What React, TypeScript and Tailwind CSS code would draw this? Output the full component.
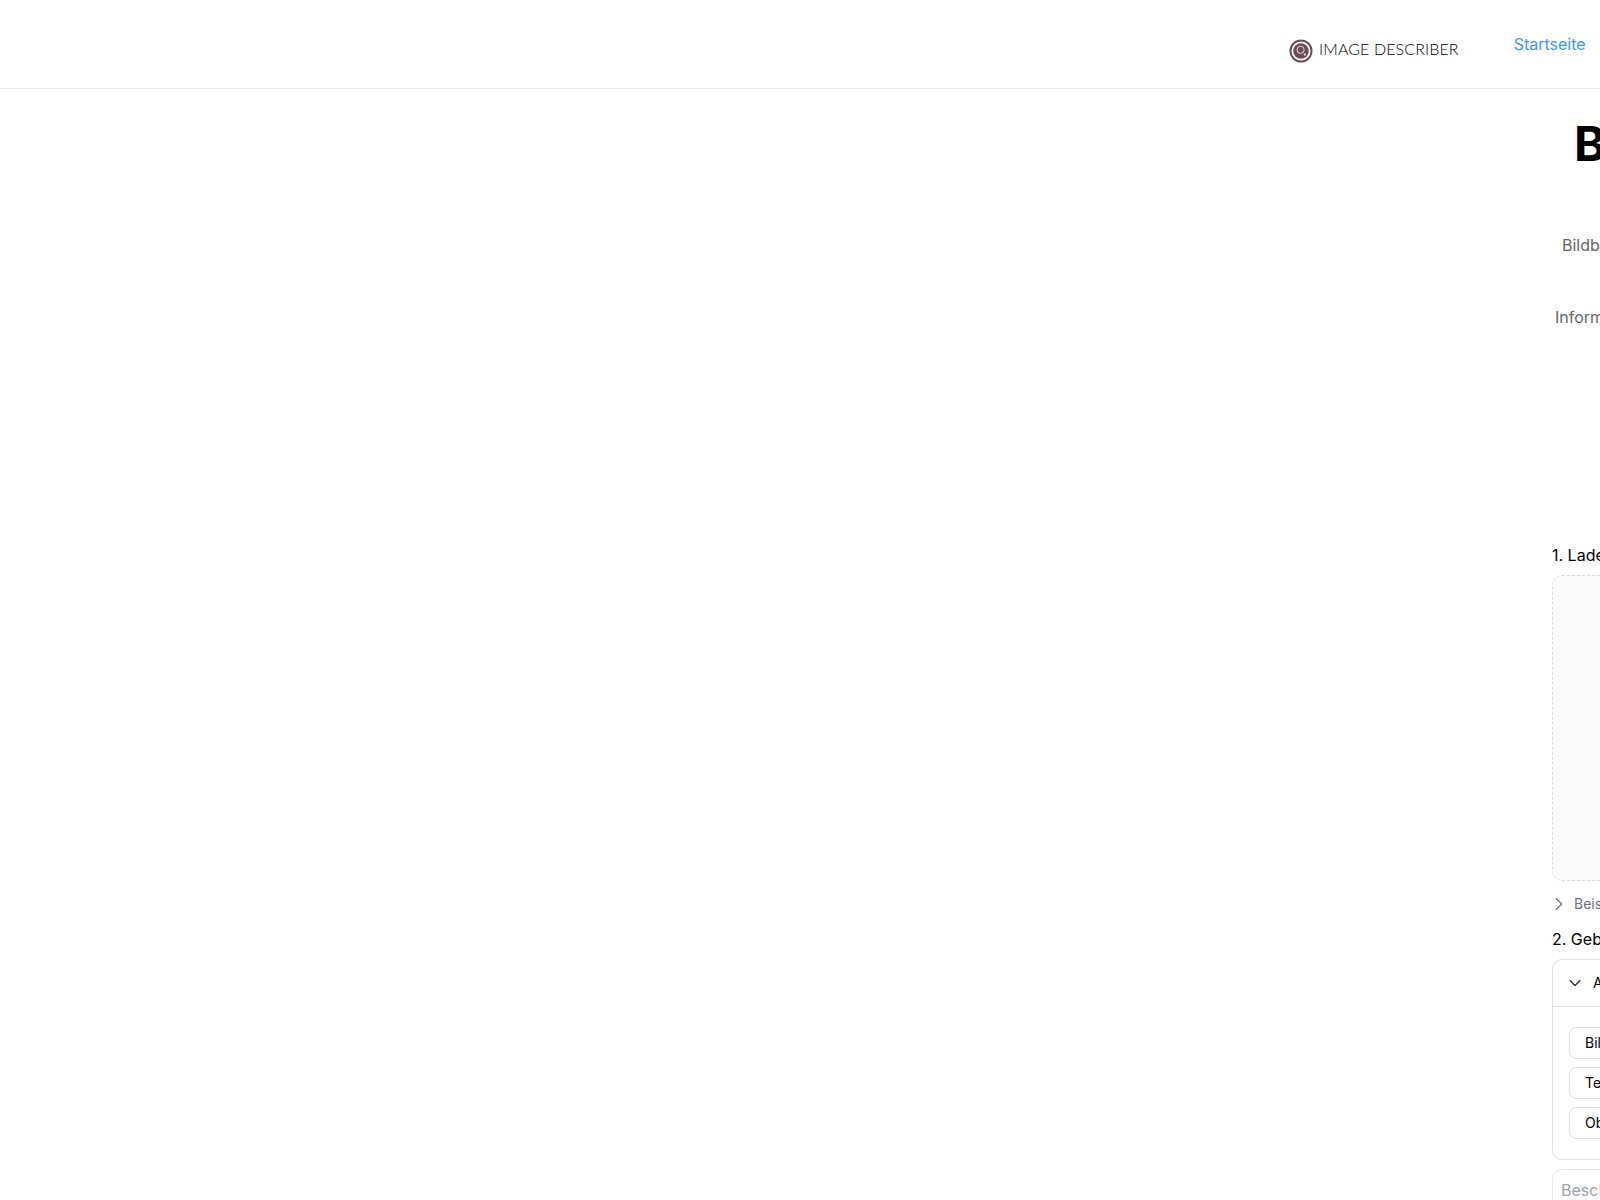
import { ChevronDown, ChevronRight } from "lucide-react";

function Logo() {
  return (
    <svg width="24" height="24" viewBox="0 0 24 24" className="shrink-0">
      <circle cx="12" cy="12" r="10.5" fill="none" stroke="#6d4c58" strokeWidth="2" />
      <circle cx="12" cy="12" r="7.8" fill="#6d4c58" />
      <circle cx="11.6" cy="10.8" r="3.6" fill="none" stroke="#e6dce0" strokeWidth="1" />
      <circle cx="15.8" cy="15.6" r="1.1" fill="#efe8ea" />
    </svg>
  );
}

const chips = ["Bildbeschreibung", "Text extrahieren", "Objekte erkennen"];

export default function App() {
  return (
    <div className="h-[1200px] w-full overflow-hidden bg-white font-['Inter',sans-serif] text-black">
      <header className="flex h-[89px] items-start border-b border-[#e5e7eb] pl-[1289px]">
        <div className="mt-[37px] flex items-center gap-[6px]">
          <Logo />
          <span className="pb-[3px] whitespace-nowrap font-['Lato',sans-serif] text-[16px] leading-6 font-light tracking-[0.1px] text-black">
            IMAGE DESCRIBER
          </span>
        </div>
        <a className="ml-[55px] mt-[32px] text-base leading-6 text-[#4096ff]">Startseite</a>
      </header>

      <main className="w-[2400px] pl-[1552px]">
        <div className="w-[800px]">
          <h1 className="mt-[25px] pl-[22px] text-5xl leading-[60px] font-bold whitespace-nowrap">
            Bildbeschreiber
          </h1>
          <p className="mt-[59px] pl-[10px] text-base leading-6 whitespace-nowrap text-[#666]">
            Bildbeschreibung mit KI
          </p>
          <p className="mt-[48px] pl-[3px] text-base leading-6 whitespace-nowrap text-[#666]">
            Informationen aus Bildern
          </p>

          <h2 className="mt-[214px] text-base leading-6 whitespace-nowrap">1. Laden Sie ein Bild hoch</h2>
          <div className="mt-[8px] h-[306px] rounded-[10px] border border-dashed border-[#d9d9d9] bg-[#fafafa]" />

          <div className="mt-[13px] flex h-5 items-center text-sm whitespace-nowrap text-[#6b7280]">
            <ChevronRight size={22} strokeWidth={1.25} className="mr-1 -ml-1 shrink-0" />
            <span>Beispiele</span>
          </div>

          <h2 className="mt-[13px] text-base leading-6 whitespace-nowrap">2. Geben Sie einen Prompt ein</h2>
          <section className="mt-[8px] rounded-[10px] border border-[#e0e0e0]">
            <div className="flex h-[47px] items-center border-b border-[#e0e0e0] pl-[12px] text-sm">
              <ChevronDown size={20} strokeWidth={1.3} className="mr-2 shrink-0 text-[#222]" />
              <span className="whitespace-nowrap">Aufgaben</span>
            </div>
            <div className="flex flex-col items-start gap-2 px-4 pt-5 pb-5">
              {chips.map((chip) => (
                <button
                  key={chip}
                  type="button"
                  className="h-8 rounded-lg border border-[#e0e0e0] px-[15px] text-sm whitespace-nowrap"
                >
                  {chip}
                </button>
              ))}
            </div>
          </section>
          <div className="mt-[9px] h-[80px] rounded-[10px] border border-[#e5e7eb] px-[8px] py-[8px] text-base whitespace-nowrap text-[#9ca3af]">
            Beschreiben Sie das Bild
          </div>
        </div>
      </main>
    </div>
  );
}
